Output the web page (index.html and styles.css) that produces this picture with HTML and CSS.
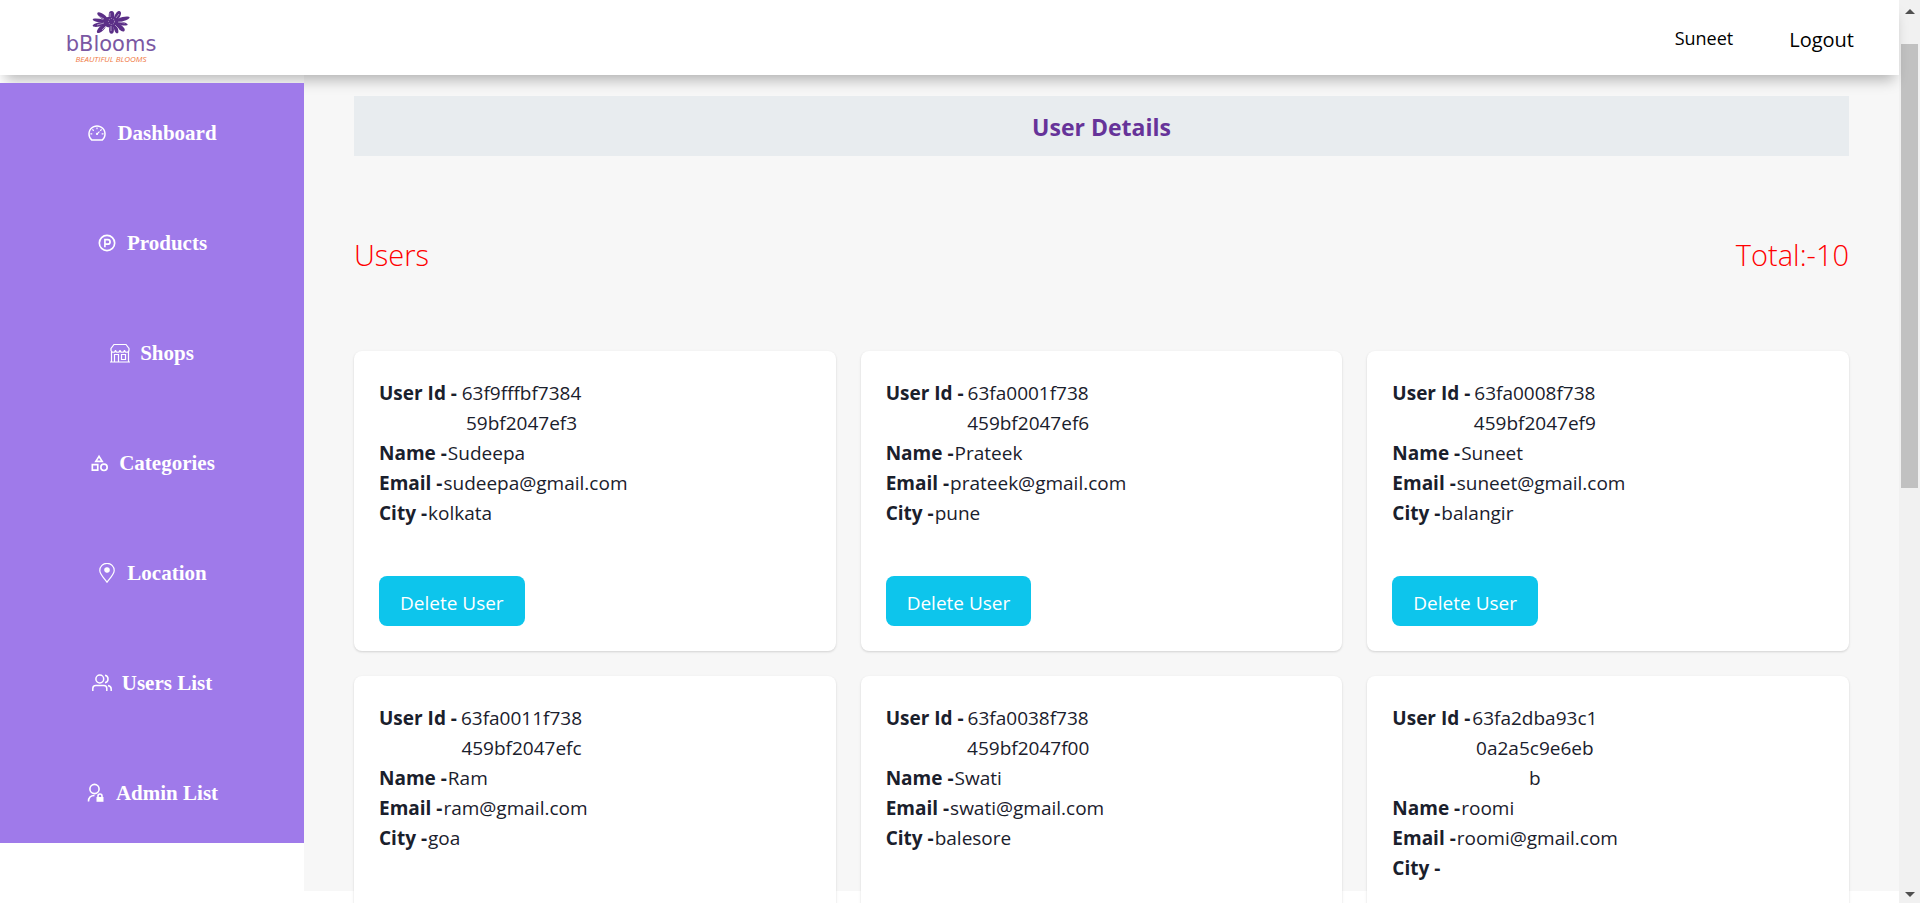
FILE: index.html
```html
<!DOCTYPE html>
<html lang="en">
<head>
<meta charset="utf-8">
<title>User Details</title>
<link rel="stylesheet" href="styles.css">
</head>
<body>
<div class="window">
  <div class="page">
    <header class="topbar">
      <a class="logo" href="#" aria-label="bBlooms home">
        <svg class="flower" viewBox="0 0 38 23">
          <g fill="#5b2f87">
            <ellipse cx="19.500" cy="4.500" rx="2.800" ry="4.400"/>
            <ellipse cx="25.500" cy="4.800" rx="2.600" ry="5.200" transform="rotate(28 25.500 4.800)"/>
            <ellipse cx="31" cy="8" rx="6.800" ry="2" transform="rotate(-14 31 8)"/>
            <ellipse cx="30" cy="12.500" rx="5.800" ry="1.700" transform="rotate(12 30 12.500)"/>
            <ellipse cx="28.500" cy="16.500" rx="5.200" ry="2.300" transform="rotate(42 28.500 16.500)"/>
            <ellipse cx="19.500" cy="18.500" rx="2.400" ry="4.300"/>
            <ellipse cx="24" cy="18" rx="1.900" ry="4.600" transform="rotate(-18 24 18)"/>
            <ellipse cx="9.500" cy="17.500" rx="6" ry="2.500" transform="rotate(-45 9.500 17.500)"/>
            <ellipse cx="7" cy="13.500" rx="6.500" ry="2" transform="rotate(-12 7 13.500)"/>
            <ellipse cx="7" cy="9.500" rx="6.400" ry="1.700" transform="rotate(10 7 9.500)"/>
            <ellipse cx="10.500" cy="5.500" rx="6.200" ry="2.400" transform="rotate(36 10.500 5.500)"/>
            <ellipse cx="19" cy="11" rx="8.500" ry="5.500"/>
          </g>
          <g stroke="#fff" stroke-width=".5" fill="none">
            <path d="M12 8l-6-3M12 12l-7 2M14 15l-4 4M19 15v5M23 14l4 4M26 11l7 1M24 7l3-4M18 6V2"/>
            <circle cx="19.500" cy="10.500" r="3" stroke-dasharray="1 1.200"/>
          </g>
        </svg>
        <span class="brand">bBlooms</span>
        <span class="tagline">BEAUTIFUL BLOOMS</span>
      </a>
      <nav class="account">
        <span class="who">Suneet</span>
        <button class="logout" type="button">Logout</button>
      </nav>
    </header>

    <div class="shell">
      <nav class="sidebar">
        <a href="#"><svg viewBox="0 0 1024 1024" fill="currentColor"><path d="M924.800 385.600a446.700 446.700 0 0 0-96-142.400 446.700 446.700 0 0 0-142.400-96C631.100 123.800 572.500 112 512 112s-119.100 11.800-174.400 35.200a446.700 446.700 0 0 0-142.400 96 446.700 446.700 0 0 0-96 142.400C75.800 440.900 64 499.500 64 560c0 132.700 58.300 257.700 159.900 343.100l1.700 1.400c5.800 4.800 13.100 7.500 20.600 7.500h531.700c7.500 0 14.800-2.700 20.600-7.500l1.700-1.400C901.700 817.700 960 692.700 960 560c0-60.500-11.900-119.100-35.200-174.400zM761.400 836H262.600A371.120 371.120 0 0 1 140 560c0-99.400 38.700-192.800 109-263 70.300-70.300 163.700-109 263-109 99.400 0 192.800 38.700 263 109 70.300 70.300 109 163.700 109 263 0 105.600-44.500 205.500-122.600 276zM623.500 421.500a8.030 8.030 0 0 0-11.300 0L527.700 506c-18.700-5-39.400-.2-54.100 14.500a55.950 55.950 0 0 0 0 79.200 55.950 55.950 0 0 0 79.200 0 55.870 55.870 0 0 0 14.500-54.100l84.500-84.500c3.100-3.100 3.100-8.200 0-11.300l-28.300-28.300zM490 320h44c4.400 0 8-3.600 8-8v-80c0-4.400-3.600-8-8-8h-44c-4.400 0-8 3.600-8 8v80c0 4.400 3.600 8 8 8zm260 218v44c0 4.400 3.600 8 8 8h80c4.400 0 8-3.600 8-8v-44c0-4.400-3.600-8-8-8h-80c-4.400 0-8 3.600-8 8zm12.700-197.200-31.100-31.100a8.030 8.030 0 0 0-11.300 0l-56.600 56.600a8.030 8.030 0 0 0 0 11.300l31.100 31.100c3.100 3.100 8.200 3.100 11.300 0l56.600-56.600c3.100-3.100 3.100-8.200 0-11.300zm-458.600-31.100a8.030 8.030 0 0 0-11.300 0l-31.100 31.100a8.030 8.030 0 0 0 0 11.300l56.600 56.600c3.100 3.100 8.200 3.100 11.300 0l31.100-31.100c3.100-3.100 3.100-8.200 0-11.300l-56.600-56.600zM262 530h-80c-4.400 0-8 3.600-8 8v44c0 4.400 3.600 8 8 8h80c4.400 0 8-3.600 8-8v-44c0-4.400-3.600-8-8-8z"/></svg>Dashboard</a>
        <a href="#"><svg viewBox="0 0 24 24" fill="none" stroke="currentColor" stroke-width="2"><circle cx="12" cy="12" r="9.200"/><path d="M9.500 17V8h3.500a2.700 2.700 0 0 1 0 5.400H9.500"/></svg>Products</a>
        <a href="#"><svg viewBox="0 0 20 20" fill="none" stroke="currentColor" stroke-width="1.200"><path d="M4 1.500h12l3 4v1.500a2.200 2.200 0 0 1-4.500 0 2.200 2.200 0 0 1-4.500 0 2.200 2.200 0 0 1-4.500 0A2.200 2.200 0 0 1 1 7V5.500zM1.500 9v9.500M18.500 9v9.500M0 19h20M4.500 19v-7.500h4V19M11.500 11.500h4v5h-4z"/></svg>Shops</a>
        <a href="#"><svg viewBox="0 0 24 24" fill="none" stroke="currentColor" stroke-width="2"><path d="M12 4 8.200 10h7.600zM4 14h6.500v6.500H4z"/><circle cx="18" cy="17.200" r="3.800"/></svg>Categories</a>
        <a href="#"><svg viewBox="0 0 20 20" fill="none" stroke="currentColor" stroke-width="1.200"><path d="M10 19.300C8 16 2.800 11.500 2.800 7.500a7.200 7.200 0 0 1 14.400 0C17.200 11.500 12 16 10 19.300z"/><circle cx="10" cy="7" r="2.200" fill="currentColor"/></svg>Location</a>
        <a href="#"><svg viewBox="0 0 20 20" fill="none" stroke="currentColor" stroke-width="1.500"><circle cx="7.800" cy="6" r="3.900"/><path d="M.8 18v-2.500a3 3 0 0 1 3-3h8a3 3 0 0 1 3 3V18M13 2.200a3.900 3.900 0 0 1 0 7.600M16 12.600c2 .4 3.200 1.600 3.200 3.400v2"/></svg>Users List</a>
        <a href="#"><svg viewBox="0 0 20 20" fill="none" stroke="currentColor" stroke-width="1.600"><circle cx="8.500" cy="6" r="4.600"/><path d="M2.500 18.500c0-4 2.500-6 6-6M12 14.500V13a2 2 0 0 1 4 0v1.500"/><path d="M10.500 14h7v4.800h-7z" fill="currentColor" stroke="none"/></svg>Admin List</a>
      </nav>

      <main class="content">
        <h1 class="title">User Details</h1>
        <div class="summary"><span>Users</span><span>Total:-10</span></div>
        <section class="cards">
          <article class="card">
            <div class="idrow"><b>User Id -</b><span>63f9fffbf7384<br>59bf2047ef3</span></div>
            <p><b>Name -</b>Sudeepa</p><p><b>Email -</b>sudeepa@gmail.com</p><p><b>City -</b>kolkata</p>
            <button class="delete" type="button">Delete User</button>
          </article>
          <article class="card">
            <div class="idrow"><b>User Id -</b><span>63fa0001f738<br>459bf2047ef6</span></div>
            <p><b>Name -</b>Prateek</p><p><b>Email -</b>prateek@gmail.com</p><p><b>City -</b>pune</p>
            <button class="delete" type="button">Delete User</button>
          </article>
          <article class="card">
            <div class="idrow"><b>User Id -</b><span>63fa0008f738<br>459bf2047ef9</span></div>
            <p><b>Name -</b>Suneet</p><p><b>Email -</b>suneet@gmail.com</p><p><b>City -</b>balangir</p>
            <button class="delete" type="button">Delete User</button>
          </article>
          <article class="card">
            <div class="idrow"><b>User Id -</b><span>63fa0011f738<br>459bf2047efc</span></div>
            <p><b>Name -</b>Ram</p><p><b>Email -</b>ram@gmail.com</p><p><b>City -</b>goa</p>
          </article>
          <article class="card">
            <div class="idrow"><b>User Id -</b><span>63fa0038f738<br>459bf2047f00</span></div>
            <p><b>Name -</b>Swati</p><p><b>Email -</b>swati@gmail.com</p><p><b>City -</b>balesore</p>
          </article>
          <article class="card">
            <div class="idrow"><b>User Id -</b><span>63fa2dba93c1<br>0a2a5c9e6eb<br>b</span></div>
            <p><b>Name -</b>roomi</p><p><b>Email -</b>roomi@gmail.com</p><p><b>City -</b></p>
          </article>
        </section>
      </main>
    </div>
  </div>
  <div class="scrollbar" aria-hidden="true">
    <span class="arrow up"></span>
    <span class="thumb"></span>
    <span class="arrow down"></span>
  </div>
</div>
</body>
</html>
```

FILE: styles.css
```css
* { box-sizing: border-box; }
body {
  margin: 0;
  font-family: "Open Sans", "Noto Sans", sans-serif;
  font-size: 19px;
  line-height: 30px;
  color: #1a202c;
  background: #fff;
}
p, h1 { margin: 0; }
a { color: inherit; text-decoration: none; }
button { border: 0; background: none; font: inherit; cursor: pointer; }

.window { display: flex; height: 100vh; overflow: hidden; }
.page { flex: 1; min-width: 0; display: flex; flex-direction: column; }

.topbar {
  flex: none;
  display: flex;
  justify-content: space-between;
  align-items: center;
  height: 75px;
  padding: 0 45px 0 62px;
  background: #fff;
  box-shadow: 0 10px 13px -5px rgba(0, 0, 0, .28);
  position: relative;
  z-index: 1;
}
.logo { display: flex; flex-direction: column; align-items: center; width: 98px; }
.flower { width: 38px; height: 23px; }
.brand { font: 400 21px/20px "DejaVu Sans", sans-serif; color: #7a58a3; }
.tagline { font: italic 8px/10px "Open Sans", sans-serif; color: #f07a45; white-space: nowrap; }
.account { display: flex; align-items: center; gap: 56px; color: #000; }
.who { font-size: 18px; }
.logout { padding: 5px 0 0; font-size: 20px; font-weight: 500; }

.shell { flex: 1; min-height: 0; display: flex; }
.sidebar {
  align-self: flex-start;
  flex: none;
  display: flex;
  flex-direction: column;
  gap: 10px;
  width: 304px;
  margin-top: 8px;
  background: #9f7aea;
  position: relative;
  z-index: 2;
}
.sidebar a {
  display: flex;
  align-items: center;
  justify-content: center;
  gap: 10px;
  height: 100px;
  color: #fff;
  font-family: "Liberation Serif", serif;
  font-size: 21px;
  font-weight: 700;
}
.sidebar svg { width: 20px; height: 20px; }

.content {
  flex: 1;
  min-width: 0;
  height: calc(100% - 12px);
  padding: 21px 50px 0;
  background: #f7f7f7;
}
.title {
  padding: 16px 0 14px;
  background: #e8ecef;
  color: #663399;
  font-size: 23px;
  line-height: 30px;
  font-weight: 700;
  text-align: center;
}
.summary {
  display: flex;
  justify-content: space-between;
  padding: 76px 0 74px;
  color: #f00;
  font-size: 29px;
  line-height: 45px;
  font-weight: 300;
}
.cards { display: grid; grid-template-columns: repeat(3, 1fr); gap: 25px; }
.card {
  display: flex;
  flex-direction: column;
  align-items: flex-start;
  min-height: 300px;
  padding: 27px 25px 25px;
  border-radius: 8px;
  background: #fff;
  box-shadow: 0 1px 3px rgba(0, 0, 0, .1), 0 1px 2px rgba(0, 0, 0, .06);
}
.card b { margin-right: 1px; }
.idrow { display: flex; }
.idrow b { width: 79px; white-space: nowrap; }
.idrow span { width: 125px; text-align: center; }
.delete {
  height: 50px;
  margin-top: auto;
  padding: 3px 21px 0;
  border-radius: 8px;
  background: #0dc5ec;
  color: #fff;
}

.scrollbar {
  flex: none;
  display: flex;
  flex-direction: column;
  align-items: center;
  width: 21px;
  padding: 9px 0 6px;
  background: #f1f1f1;
}
.arrow { width: 0; height: 0; border: 5px solid transparent; }
.up { border-top: 0; border-bottom-color: #505050; }
.down { border-bottom: 0; border-top-color: #505050; margin-top: auto; }
.thumb { width: 17px; height: 50%; margin-top: 30px; background: #c1c1c1; }
```
